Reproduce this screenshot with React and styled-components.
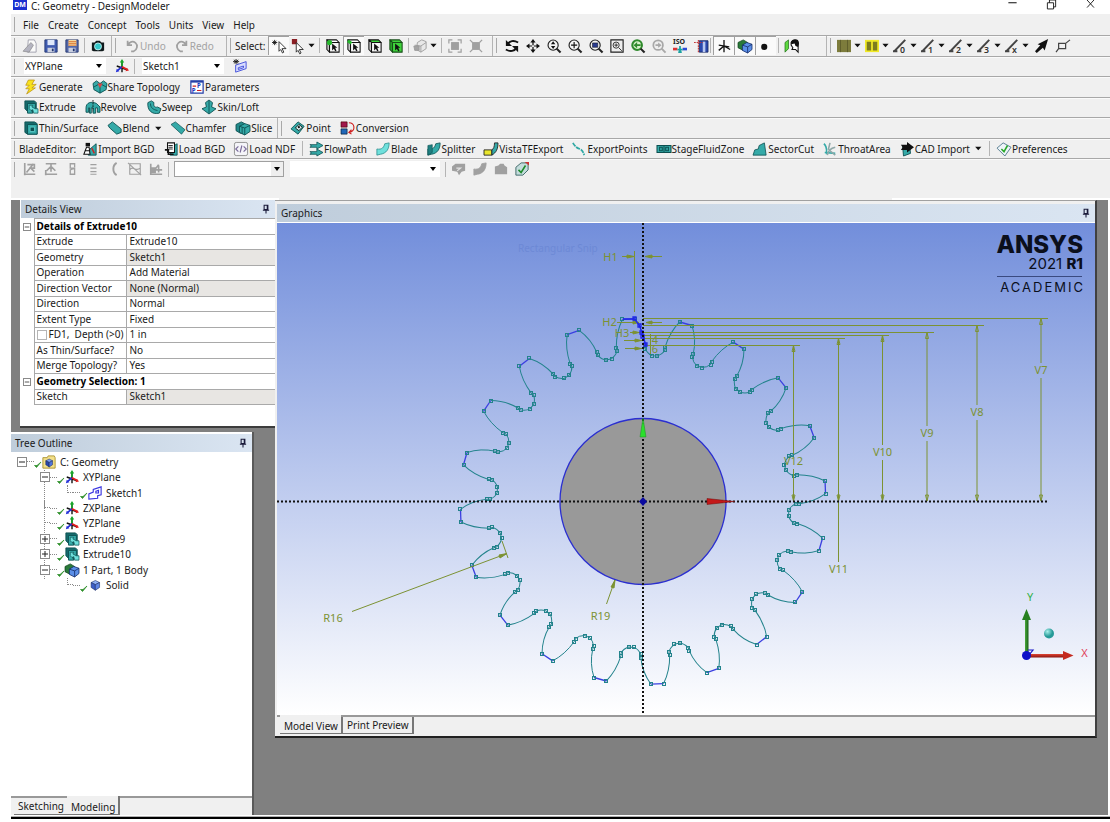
import React from 'react'
import styled, { createGlobalStyle, css } from 'styled-components'

const GlobalStyle = createGlobalStyle`
  body {
    margin: 0;
    background: #fff;
    font-family: 'Noto Sans', 'Open Sans', sans-serif;
    font-size: 10px;
    line-height: 14px;
    color: #1a1a1a;
  }
  button, select, input {
    font: inherit;
    color: inherit;
  }
`

const Page = styled.div`
  display: flex;
  flex-direction: column;
  min-height: 100vh;
  box-sizing: border-box;
  padding-left: 11px;
  overflow-x: hidden;
`

const TitleBar = styled.header`
  display: flex;
  align-items: flex-start;
  height: 14px;
  background: #fff;
`

const AppBadge = styled.span`
  width: 14px;
  height: 10px;
  margin: 0 4px 0 2px;
  background: #1b2fd0;
  color: #fff;
  font-size: 7px;
  font-weight: 700;
  line-height: 10px;
  text-align: center;
`

const Title = styled.h1`
  flex: 1;
  margin: 0;
  font-size: 10px;
  font-weight: 400;
  line-height: 12px;
`

const WindowButton = styled.button`
  display: flex;
  justify-content: center;
  width: 39px;
  height: 10px;
  padding: 0;
  border: 0;
  background: none;
`

const MenuBar = styled.nav`
  display: flex;
  align-items: center;
  height: 21px;
  background: #f0f0f0;
`

const MenuItem = styled.button`
  padding: 0 5px 0 4px;
  border: 0;
  background: none;
  white-space: nowrap;
`

const Toolbars = styled.div`
  display: grid;
  grid-auto-rows: 1fr;
  height: 144px;
  background: #f0f0f0;
`

const Toolbar = styled.div`
  display: flex;
  min-width: 0;
  border-top: 1px solid #a8a8a8;
  box-shadow: inset 0 1px #fafafa;
`

const Band = styled.div`
  display: flex;
  align-items: center;
  flex: none;
  box-sizing: border-box;
  width: ${p => (p.$w ? p.$w + 'px' : 'auto')};
  border-right: ${p => (p.$last ? '0' : '1px solid #b4b4b4')};
`

const Grip = styled.span`
  flex: none;
  width: 1px;
  height: 15px;
  margin: 0 4px 0 3px;
  background: #a9a9a9;
`

const Sep = styled.span`
  flex: none;
  width: 1px;
  height: 15px;
  margin: 0 2px;
  background: #b4b4b4;
`

const Spread = styled.div`
  display: flex;
  justify-content: space-between;
  width: 207px;
  & > * {
    min-width: 0;
    flex: 0 1 21px;
  }
`

const ToolButton = styled.button`
  display: flex;
  flex: none;
  align-items: center;
  justify-content: center;
  box-sizing: border-box;
  width: ${p => (p.$drop ? '28px' : '21px')};
  height: 19px;
  gap: 3px;
  padding: 0;
  border: 0;
  background: none;
  ${p => p.$pressed && css`
    background: #fafafa;
    box-shadow: inset 1px 1px #a0a0a0;
  `}
`

const LabelButton = styled.button`
  display: flex;
  flex: none;
  align-items: center;
  gap: 1px;
  padding: 0 5px;
  border: 0;
  background: none;
  white-space: nowrap;
  ${p => p.$tight && css`
    padding: 0 5px 0 4px;
  `}
  &:disabled {
    color: #a3a3a3;
  }
`

const BarLabel = styled.span`
  padding-right: 3px;
  white-space: nowrap;
`

const Picker = styled.label`
  position: relative;
  display: block;
  width: ${p => p.$w}px;
  margin: 0 ${p => (p.$close ? '3px' : '5px')};
  &::after {
    content: '';
    position: absolute;
    right: 4px;
    top: 6px;
    border: 3px solid transparent;
    border-top: 4px solid #000;
    border-bottom: 0;
    pointer-events: none;
  }
`

const PickerSelect = styled.select`
  display: block;
  box-sizing: border-box;
  width: 100%;
  height: 16px;
  padding: 0 1px;
  border: ${p => (p.$sunken ? '1px solid #a0a0a0' : '0')};
  border-radius: 0;
  background: ${p => (p.$sunken ? 'linear-gradient(#eee, #eee) right / 12px 100% no-repeat #fff' : '#fff')};
  appearance: none;
  line-height: 14px;
`

const ToolbarFoot = styled.div`
  display: flex;
  justify-content: space-between;
  align-items: flex-end;
  height: 21px;
  background: #f0f0f0;
`

const FootEdge = styled.span`
  height: 2px;
  width: ${p => p.$w}px;
  background: #fff;
`

const Workspace = styled.main`
  display: flex;
  flex: 1;
  align-items: stretch;
  margin-right: 2px;
  background: #808080;
`

const SideColumn = styled.div`
  display: flex;
  flex-direction: column;
  flex: none;
  width: 264px;
`

const DetailsPanel = styled.section`
  display: flex;
  flex-direction: column;
  height: 226px;
  margin-left: 9px;
  padding-left: 1px;
  border-bottom: 2px solid #3c3c3c;
  box-sizing: content-box;
  background: #fff;
`

const PanelTitle = styled.div`
  display: flex;
  align-items: center;
  flex: none;
  justify-content: space-between;
  height: 18px;
  padding: 0 4px;
  background: linear-gradient(90deg, #bfcddb, #dae5f2);
`

const PanelHeading = styled.h2`
  margin: 0;
  font-size: 10px;
  font-weight: 400;
`

const PinButton = styled.button`
  display: flex;
  padding: 0;
  border: 0;
  background: none;
`

const DetailsTable = styled.table`
  width: 100%;
  height: 187px;
  border-collapse: collapse;
  table-layout: fixed;
`

const Gutter = styled.td`
  width: 13px;
  padding: 0;
  text-align: center;
  line-height: 8px;
`

const NameCell = styled.th`
  width: 92px;
  padding: 0 0 0 2px;
  border: 1px solid #a9a9a9;
  box-sizing: border-box;
  font-weight: 400;
  text-align: left;
  line-height: 13px;
  white-space: nowrap;
`

const HeadCell = styled(NameCell)`
  width: auto;
  font-weight: 700;
  color: #000;
  border-right: 0;
`

const ValueCell = styled.td`
  padding: 0 0 0 3px;
  border: 1px solid #a9a9a9;
  border-right: 0;
  line-height: 13px;
  background: ${p => (p.$locked ? '#e8e6e3' : '#fff')};
`

const CheckLabel = styled.label`
  display: flex;
  align-items: center;
  gap: 2px;
  white-space: pre;
`

const Tick = styled.input`
  flex: none;
  width: 10px;
  height: 10px;
  margin: 0;
  border: 1px solid #b5b5b5;
  background: #fff;
  appearance: none;
`

const Expander = styled.button`
  display: inline-flex;
  flex: none;
  align-items: center;
  justify-content: center;
  box-sizing: border-box;
  width: ${p => (p.$small ? '8px' : '10px')};
  height: ${p => (p.$small ? '8px' : '10px')};
  padding: 0;
  border: 1px solid #8a8a8a;
  background: #fff;
`

const TreePanel = styled.section`
  display: flex;
  flex-direction: column;
  flex: 1;
  width: 241px;
  margin-top: 4px;
  border-right: 2px solid #5a5a5a;
  background: #fff;
`

const TreeTitle = styled(PanelTitle)`
  margin-top: 2px;
`

const TreeList = styled.ul`
  display: grid;
  grid-auto-rows: 1fr;
  height: 139px;
  margin: 2px 0 auto;
  padding: 0 0 0 6px;
  list-style: none;
  background: repeating-linear-gradient(#888 0 1px, #fff 1px 2px) 33px 16px / 1px 110px no-repeat;
`

const TreeRow = styled.li`
  display: flex;
  align-items: center;
`

const Guide = styled.span`
  flex: none;
  width: 23px;
`

const Elbow = styled.span`
  align-self: flex-start;
  flex: none;
  box-sizing: border-box;
  width: 6px;
  height: 50%;
  margin-left: 4px;
  border-left: 1px dotted #888;
  border-bottom: 1px dotted #888;
`

const Dash = styled.span`
  flex: none;
  width: 7px;
  border-top: 1px dotted #888;
`

const TreeLabel = styled.span`
  margin-left: 4px;
  white-space: nowrap;
`

const CheckMark = styled.span`
  align-self: flex-end;
`

const TabBar = styled.div`
  display: flex;
  align-items: flex-start;
  height: ${p => p.$h}px;
  padding-left: 3px;
  border-top: 2px solid #999;
  box-sizing: border-box;
  background: #f0f0f0;
`

const Tab = styled.button`
  height: 17px;
  padding: 0 3px 0 4px;
  border: 0;
  border-bottom: 1px solid #777;
  border-right: ${p => (p.$edge ? '2px solid #777' : '0')};
  border-left: ${p => (p.$boxed ? '2px solid #777' : '0')};
  background: #f0f0f0;
  white-space: nowrap;
  ${p => p.$active && css`
    height: 19px;
    margin-top: -2px;
    padding-top: 4px;
  `}
`

const GraphicsPanel = styled.section`
  flex: 1;
  align-self: flex-start;
  min-width: 0;
  margin-right: 11px;
  padding: 3px 0 0 2px;
  border-top: 1px solid #a0a0a0;
  border-right: 2px solid #404040;
  border-bottom: 2px solid #202020;
  background: #f0f0f0;
`

const Viewport = styled.div`
  height: 492px;
  border-top: 1px solid #fff;
  background: linear-gradient(#728edb, #fff);
`

const Scene = styled.svg`
  display: block;
  width: 100%;
  height: 100%;
  font-family: 'Noto Sans', 'Open Sans', sans-serif;
`

const BottomRule = styled.footer`
  height: 2px;
  margin: 1px 0 3px;
  background: #000;
  border-top: 1px solid #b0b0b0;
`

/* ---------- icons ---------- */

const T = '#35aaa8'
const TL = '#6fe0dc'
const TD = '#0b4f50'

const axes = (
  <g strokeWidth="2" fill="none">
    <path d="M8 15V3M2 8l11 4" stroke="#111" strokeWidth="1.6" />
    <path d="M8 8V2" stroke="#18a52a" />
    <path d="M8 9l-5 4" stroke="#2430d8" />
    <path d="M8 9l6 3" stroke="#e02020" />
    <path d="M16 13l-4 1 1.500-4z" fill="#e02020" />
    <path d="M1 15l1-4 3 3z" fill="#2430d8" />
    <path d="M5.500 4L8 0l2.500 4z" fill="#18a52a" />
  </g>
)
const lens = (c, body) => (
  <g>
    <circle cx="7" cy="7" r="5.8" fill="#f4f4f4" stroke={c} strokeWidth="1.3" />
    <path d="M11 11l4.500 4.500" stroke={c} strokeWidth="2.4" />
    {body}
  </g>
)
const cube = (top, face, side, edge = '#111') => (
  <g stroke={edge} strokeWidth="1.2" strokeLinejoin="round">
    <path d="M1 1h11l3 3H4z" fill={top} />
    <path d="M1 1l3 3v11l-3-3z" fill={side} />
    <path d="M4 4h11v11H4z" fill={face} />
  </g>
)
const pointer = <path d="M7 5l6 5h-2.500l1.500 3.500-1.500.5L9 11l-2 2z" fill="#111" />
const isoCube = (a, b, c, e) => (
  <g stroke={e} strokeWidth=".8" strokeLinejoin="round">
    <path d="M8 1l6 3-6 3-6-3z" fill={a} />
    <path d="M2 4l6 3v8l-6-4z" fill={b} />
    <path d="M14 4L8 7v8l6-4z" fill={c} />
  </g>
)
const edgeLine = n => (
  <g>
    <path d="M1.500 14L14 1M0 14h5" stroke="#444" strokeWidth="2.2" fill="none" />
    <text x="8" y="16" fontSize="10" fontWeight="600" fill="#333">{n}</text>
  </g>
)
const bladeShape = (f, s) => <path d="M1 8c6 1 8-2 9-6l5-1c0 7-3 12-10 13l-4 1z" fill={f} stroke={s} strokeWidth=".9" />

const icons = {
  fresh: <g><path d="M6 1h7l2 4v10H5z" fill="#fafafa" stroke="#9a9aa8" /><path d="M0 14L9 4l3 3-5 8z" fill="#b4b4c0" stroke="#777" strokeWidth=".6" /></g>,
  save: <g><path d="M1 1h14v14H1z" fill="#3f5bb0" stroke="#22356f" /><path d="M4 1h8v6H4z" fill="#dfe8fa" /><path d="M4 10h8v5H4z" fill="#c9cfe0" /><path d="M9 11h2v3H9z" fill="#22356f" /></g>,
  saveAs: <g><path d="M1 1h14v14H1z" fill="#5468a8" stroke="#22356f" /><path d="M4 1h9v7H4z" fill="#f3d9a0" /><path d="M4 3h9M4 5h9M4 7h9" stroke="#d96f2c" /><path d="M4 10h8v5H4z" fill="#c9cfe0" /><path d="M9 11h2v3H9z" fill="#22356f" /></g>,
  camera: <g><path d="M1 4h3l2-2h4l2 2h3v9l-2 1H3l-2-1z" fill="#101a1c" /><circle cx="8" cy="8.500" r="4" fill="#35c7c9" stroke="#c9f4f4" /></g>,
  undo: <path d="M3 2v5h5M3.500 7C5 3 9 2 12 4.500s2 8-2 9.500H7" fill="none" stroke="#a0a0a0" strokeWidth="2" />,
  redo: <path d="M13 2v5H8M12.500 7C11 3 7 2 4 4.500s-2 8 2 9.500h3" fill="none" stroke="#a0a0a0" strokeWidth="2" />,
  pick: <g><path d="M0 4h6M3 1v6M1 2l4 4M5 2L1 6" stroke="#111" /><path d="M8 3v11l2-2 2 4 1.500-1-2-4H16z" fill="#fff" stroke="#222" /></g>,
  pickBox: <g><path d="M1 0h6v6H1z" fill="#8a1f24" /><path d="M6 4v11l2-2 2 4 1.500-1-2-4H14z" fill="#fff" stroke="#222" /></g>,
  cubePoint: <g>{cube('#fff', '#f4f4f4', '#cfcfcf')}<circle cx="4" cy="4" r="3" fill="#26b82d" />{pointer}</g>,
  cubeEdge: <g>{cube('#fff', '#f4f4f4', '#cfcfcf')}<path d="M1 2l4 3" stroke="#26b82d" strokeWidth="3.500" />{pointer}</g>,
  cubeFace: <g>{cube('#3fd43c', '#f4f4f4', '#cfcfcf')}{pointer}</g>,
  cubeBody: <g>{cube('#3fd43c', '#3fd43c', '#2ba62c', '#174f18')}{pointer}</g>,
  cubeGray: <g stroke="#9a9a9a"><path d="M5 4l5-3 5 2v8l-6 4-5-3z" fill="#e8e8e8" /><path d="M2 7l7 1 6-4M9 8v7" fill="none" /><path d="M1 8h6v5H2z" fill="#a4a4a4" /></g>,
  extend: <g fill="#a0a0a0"><path d="M3.500 3.500h9v9h-9z" /><path d="M1 5V1h4M11 1h4v4M15 11v4h-4M5 15H1v-4" fill="none" stroke="#a0a0a0" strokeWidth="1.400" /></g>,
  shrink: <g fill="#a0a0a0"><path d="M3.500 3.500h9v9h-9z" /><path d="M1 1l3 3M15 1l-3 3M15 15l-3-3M1 15l3-3" stroke="#a0a0a0" strokeWidth="1.400" /></g>,
  rotate: <g fill="none" stroke="#111" strokeWidth="2.200"><path d="M3 6c2-4 7-5 12-2M13 10c-2 4-7 5-12 2" /><path d="M1 1v7h7zM15 15V8H8z" fill="#111" stroke="none" /></g>,
  pan: <g fill="#111"><path d="M8 0l3 4H5zM8 16l3-4H5zM0 8l4-3v6zM16 8l-4-3v6z" /><path d="M8 3v10M3 8h10" stroke="#111" strokeWidth="1.400" strokeDasharray="4 2" /></g>,
  zoom: lens('#222', <path d="M7 2.500L9.500 6h-5zM7 11.500L9.500 8h-5z" fill="#111" />),
  zoomIn: lens('#222', <path d="M3.500 7h7M7 3.500v7" stroke="#111" strokeWidth="1.300" />),
  zoomBox: lens('#222', <path d="M4 4.500h6v5H4z" fill="#2a3b8f" stroke="#111" strokeWidth=".6" />),
  zoomFit: <g><path d="M1 1h14v14H1z" fill="#eee" stroke="#222" strokeWidth="1.300" /><circle cx="7" cy="7" r="3.500" fill="none" stroke="#222" /><path d="M5 7h4M7 5v4M10 10l3.500 3.500" stroke="#222" /></g>,
  zoomPrev: <g><circle cx="7" cy="7" r="5.500" fill="#d9f3cc" stroke="#2f8a2c" strokeWidth="2.400" /><path d="M3 7l4-3.500V6h4v2H7v2.500z" fill="#2f8a2c" /><path d="M11 11l4.500 4.500" stroke="#222" strokeWidth="2.400" /></g>,
  zoomNext: <g><circle cx="7" cy="7" r="5.500" fill="#eee" stroke="#a8a8a8" strokeWidth="2" /><path d="M11 7L7 4v2H4v2h3v2z" fill="#a8a8a8" /><path d="M11 11l4.500 4.500" stroke="#a8a8a8" strokeWidth="2.200" /></g>,
  iso: <g><text x="0" y="6" fontSize="8" fontWeight="700" fill="#222">ISO</text><path d="M8 8v7" stroke="#18a0a0" strokeWidth="2" /><path d="M0 10h5v3H0z" fill="#d33" /><path d="M11 10h5v3h-5z" fill="#2a4bd8" /><path d="M5 12h6M6 15h4" stroke="#18a0a0" strokeWidth="2" /></g>,
  lookAt: <g><path d="M6 2h10v13H6z" fill="#2c49ad" stroke="#1a2a66" /><path d="M10 3h3v12h-3z" fill="#b9c8f0" /><path d="M5 15V0M0 4h10" stroke="#c23a3a" strokeWidth="1.300" strokeDasharray="2 1" /></g>,
  plane: <path d="M8 1v14M2 13l6-5 7 4M2 7l12 2" fill="none" stroke="#111" strokeWidth="1.500" />,
  bodies: <g><path d="M0 4l6-3 5 3v6l-5 3-6-3z" fill="#2a7a3a" stroke="#10401a" strokeWidth=".8" /><path d="M5 7l5-3 6 2v6l-5 4-6-3z" fill="#5b8fe8" stroke="#132a66" strokeWidth=".9" /><path d="M5 7l6 2v7M11 9l5-3" fill="none" stroke="#132a66" strokeWidth=".9" /></g>,
  dot: <circle cx="6" cy="9" r="3.500" fill="#111" />,
  face: <g><path d="M0 4l4-3v10l-4 4z" fill="#5ed83f" stroke="#1d6f14" strokeWidth=".8" /><path d="M7 4c2-4 8-4 8 0v11l-3-3H8l1-2-2-3z" fill="#fff" stroke="#111" strokeWidth="1.200" /><path d="M7 3c3-4 9-2 9 2l-1 4-3-1-1-3-4 1z" fill="#111" /></g>,
  swatch: <g><path d="M0 1h16v14H0z" fill="#7d7c3c" /><path d="M4 1v14M12 1v14" stroke="#5c5b2a" /></g>,
  swatchY: <g><path d="M0 1h16v14H0z" fill="#f1ea28" /><path d="M2 3h5v10H2zM9 3h5v10H9z" fill="#7d7c1e" /></g>,
  e0: edgeLine('0'), e1: edgeLine('1'), e2: edgeLine('2'), e3: edgeLine('3'), ex: edgeLine('x'),
  arrowNE: <path d="M15 0L3 6l3 1-6 7 2 2 7-6 2 3z" fill="#111" />,
  flagBox: <path d="M3 5h8v6H3zM0 15l3-4M11 5l5-4" fill="none" stroke="#444" strokeWidth="1.400" />,
  axes,
  newSketch: <g><path d="M3 7l12-4v8L3 15zM6 10l6-2v2l-6 2z" fill="#d8dcff" stroke="#3a48d8" /><path d="M0 3h7M3.500 0v6M1 1l5 4M6 1L1 5" stroke="#111" /></g>,
  sketch: <path d="M1 15V9l5-2V4l9-3v9l-4 1v3zM9 6l3-1v3H9z" fill="none" stroke="#3a35e0" strokeWidth="1.300" />,
  bolt: <path d="M5 0h7L9 5h5L9 9h4L3 16l3-6H2l4-4H2z" fill="#f8e21c" stroke="#b98d10" strokeWidth=".8" />,
  share: <g><path d="M0 4l4-3 4 3 4-3 4 3-1 7-7 4-7-4z" fill={T} stroke={TD} /><path d="M8 5v10M1 8l7-4 7 4" stroke={TD} fill="none" /><path d="M5 4h6l-3 5z" fill="#d94848" /></g>,
  params: <g><path d="M1 1h14v14H1z" fill="#fff" stroke="#2540a8" strokeWidth="1.400" /><path d="M1 1h14v2H1z" fill="#2540a8" /><text x="8" y="9" fontSize="7" fontWeight="700" fill="#1a3ac0">P</text><text x="2" y="15" fontSize="7" fontWeight="700" fill="#1a3ac0">P</text><path d="M3 7h4M8 12h5" stroke="#d02020" strokeWidth="1.300" /></g>,
  extrude: <g><path d="M1 1h11l2 2v10H4l-3-3z" fill="#16696b" stroke={TD} /><path d="M4 4h9v6H8l2 5H4z" fill={T} stroke={TD} /><path d="M6 6h4l-1 2 4 2h3v5h-5l-1-4-2 1-2-2z" fill={TL} stroke={TD} strokeWidth=".8" /></g>,
  revolve: <g><path d="M0 9c0-6 6-8 12-5l4 4v6h-3V9h-2v6H8V9H6v6H4V9H3v5H0z" fill={T} stroke={TD} /><path d="M8 0v13" stroke="#111" strokeDasharray="2 1" /></g>,
  sweep: <g><path d="M1 3l4-2 3 2c-1 4 1 6 4 5l4 2-2 5C6 17 0 12 1 3z" fill={T} stroke={TD} /><path d="M4 4c0 5 3 7 8 8" fill="none" stroke={TD} /></g>,
  skin: <g><path d="M8 0l4 3-1 5 5 2-8 6-8-6 5-2-1-5z" fill={T} stroke={TD} /><path d="M8 1v14" stroke={TD} /></g>,
  thin: <g><path d="M1 1h11l3 2v12H4l-3-2z" fill="#16696b" stroke={TD} /><path d="M4 4h11v11H4z" fill={T} stroke={TD} /><path d="M7 7h5v5H7z" fill={TD} stroke={TL} strokeWidth=".8" /></g>,
  blend: <path d="M0 5l5-4 10 8v4l-5 2-8-7z" fill={T} stroke={TD} />,
  chamfer: <path d="M0 4l5-3 11 9-4 5z" fill={T} stroke={TD} strokeWidth=".8" />,
  slice: <g stroke={TD}><path d="M0 4l6-3 4 2v7l-5 4-5-3z" fill="#238a8a" /><path d="M4 6l6-3 6 2v7l-6 4-6-3z" fill={T} /><path d="M4 6l6 2v8M10 8l6-3M7 7v8" fill="none" /></g>,
  point: <g><path d="M0 9l8-8 7 5-7 9z" fill={T} stroke={TD} /><path d="M5 8l4-4 4 3-4 4z" fill="#d9f4f4" stroke="#111" /><circle cx="9" cy="7" r="1.200" fill="#111" /></g>,
  convert: <g><path d="M0 1h7v6H0z" fill="#a0184c" stroke="#400" strokeWidth=".7" /><path d="M0 9h7v6H0z" fill="#2268b8" stroke="#012" strokeWidth=".7" /><path d="M9 2c7 0 8 9 1 11M12 10l-3 3 3 2" fill="none" stroke="#d02020" strokeWidth="1.300" /></g>,
  importBgd: <g><path d="M8 8l7-6v13H6z" fill={T} stroke={TD} /><path d="M1 14L4 6h3l1 8zM2 10h6" fill="#fff" stroke="#111" strokeWidth="1.200" /><path d="M3 1h5v4H3z" fill="#111" /><path d="M10 7l3 6" stroke="#d02020" strokeWidth="1.600" /></g>,
  loadBgd: <g><path d="M10 5l5-3v13H7z" fill={T} stroke={TD} /><path d="M4 1h8v11H4z" fill="#fff" stroke="#111" strokeWidth="1.200" /><path d="M5 4h5M5 6h5M5 8h5" stroke="#111" /><path d="M1 9h4v5h6" fill="none" stroke="#111" strokeWidth="1.800" /></g>,
  ndf: <g><rect x=".5" y=".5" width="15" height="15" rx="2" fill="#f4f4f8" stroke="#888" /><path d="M5 5L2 8l3 3M11 5l3 3-3 3M9 4l-2 8" fill="none" stroke="#7a6a9a" strokeWidth="1.300" /></g>,
  flow: <path d="M1 3h8V0l7 4-7 4V6H1l2-1.500zM1 11h8V8l7 4-7 4v-2H1l2-1.500z" fill={T} stroke={TD} strokeWidth=".9" />,
  blade: bladeShape(TL, '#2b8f8f'),
  splitter: <g>{bladeShape(T, TD)}<path d="M1 4l5-1v9l-5 3z" fill="#1f7f80" stroke={TD} strokeWidth=".7" /></g>,
  vista: <g><path d="M0 9h9v6H0z" fill="#e9e62c" stroke="#222" /><path d="M9 9c2-1 3-4 3-8h4c0 7-2 11-7 14z" fill={T} stroke="#222" /></g>,
  points: <path d="M1 1c3 5 5 6 8 7s4 4 5 7" fill="none" stroke="#30a8a4" strokeWidth="2" strokeDasharray="5 1" />,
  stage: <path d="M0 4h16v8H0zM3 6h3v4H3zM10 6h3v4h-3zM8 4v8" fill={T} stroke={TD} strokeWidth="1.200" />,
  sector: <path d="M0 15l2-6 4-1 1-4 6-3 2 14z" fill={T} stroke={TD} strokeWidth=".9" />,
  throat: <g fill="none" strokeWidth="1.800"><path d="M1 2c4 3 3 7 3 12M2 12l12 1" stroke={T} /><path d="M5 15c1-6 4-8 9-9M8 10l6 5M8 1l-2 8" stroke="#8fa8a8" /></g>,
  cad: <g><path d="M3 5l8-1 1 9-8 3z" fill={T} stroke={TD} /><path d="M1 3h7V0l8 6-8 6V9H1l2-3z" fill="#111" /></g>,
  prefs: <g><path d="M0 7l7-6 9 5-7 10z" fill="#eef4f8" stroke="#4a7388" /><path d="M5 8l3 3 4-7" fill="none" stroke="#2aa82a" strokeWidth="1.800" /></g>,
  g1: <path d="M2 15V1M1 14h13M4 12l8-10M5 3h8v4H7M9 7l4 4" fill="none" stroke="#a0a0a0" strokeWidth="1.900" />,
  g2: <path d="M1 14h14M2 2h12M8 2v9M3 10l5-5 5 5M2 15V9" fill="none" stroke="#a0a0a0" strokeWidth="1.900" />,
  g3: <path d="M11 6V2H6v5h5v7H6V9l5-2" fill="none" stroke="#a0a0a0" strokeWidth="1.500" />,
  g4: <path d="M5 3h7M5 7h7M5 11h7M5 14h7" fill="none" stroke="#a0a0a0" strokeWidth="1.200" />,
  g5: <path d="M11 1c-5 3-5 11 0 14" fill="none" stroke="#a0a0a0" strokeWidth="2.200" />,
  g6: <path d="M2 2h12v12H2zM0 1l15 14M2 9c4-6 6 3 12-2" fill="none" stroke="#a0a0a0" strokeWidth="1.300" />,
  g7: <g fill="none" stroke="#a0a0a0" strokeWidth="1.900"><path d="M2 2v12h13M5 11l6-8M7 9h8M11 4v8" /><path d="M3 7h4v5H3z" fill="#a0a0a0" /></g>,
  b1: <g><path d="M0 5l4-3h11v8l-4 1-3 4-2-4-6-1z" fill="#a0a0a0" /><path d="M5 7h5l-4 3" fill="none" stroke="#e4e4e4" strokeWidth="1.200" /></g>,
  b2: bladeShape('#a0a0a0', '#a0a0a0'),
  b3: <path d="M1 5l4-1 2-2h4l1 2 3 2v8H1z" fill="#a0a0a0" />,
  b4: <g><path d="M1 6l6-5h8v8l-6 6H1z" fill="#c4dcdc" stroke="#33605f" /><path d="M4 9l3 3 5-8" fill="none" stroke="#1d8a2a" strokeWidth="1.800" /><path d="M11 0h5v4z" fill="#c33" /></g>,
  project: <g><path d="M1 3h5l1-2h7l1 2v12H1z" fill="#f3e08a" stroke="#a8902c" /><g transform="translate(3 4) scale(.65)">{isoCube('#7da0f0', '#2c49ad', '#4f74dd', '#0d1c55')}</g></g>,
  solid: <g transform="translate(2 2) scale(.8)">{isoCube('#8fb0f5', '#3c5fc8', '#5f86e6', '#16275f')}</g>,
  check: <path d="M1 9l4 4 9-11-8 7z" fill="#2d8f2a" stroke="#2d8f2a" strokeWidth="1.500" />,
  pin: <path d="M5 2h6v7H5zM3 10h10M8 10v5M10 2v7" fill="none" stroke="#1a1a3a" strokeWidth="1.700" />,
  minus: <path d="M2 8h12" stroke="#222" strokeWidth="2" />,
  plus: <path d="M2 8h12M8 2v12" stroke="#222" strokeWidth="2" />,
  arrow: <path d="M1 4h14l-7 8z" fill="#111" />,
  min: <path d="M2 4h12" stroke="#111" strokeWidth="1.500" />,
  restore: <path d="M2 4h9v9H2zM5 4V0h9v10h-3" fill="none" stroke="#111" strokeWidth="1.300" />,
  close: <path d="M3 0l10 11M13 0L3 11" stroke="#111" strokeWidth="1.300" />,
}

const Glyph = styled.svg`
  display: block;
  flex: none;
  overflow: visible;
`

const Icon = ({ name, size = 14 }) => (
  <Glyph width={size} height={size} viewBox="0 0 16 16" aria-hidden="true">{icons[name]}</Glyph>
)

const Tool = ({ icon, drop, pressed }) => (
  <ToolButton $drop={drop} $pressed={pressed} aria-label={icon}>
    <Icon name={icon} />
    {drop && <Icon name="arrow" size={7} />}
  </ToolButton>
)

const Labelled = ({ icon, children, drop, tight, disabled }) => (
  <LabelButton $tight={tight} disabled={disabled}>
    <Icon name={icon} />
    <span>{children}</span>
    {drop && <Glyph width="11" height="7" viewBox="-8 0 24 16" aria-hidden="true">{icons.arrow}</Glyph>}
  </LabelButton>
)

/* ---------- gear sketch ---------- */

const CX = 643
const CY = 501.5
const OLIVE = '#7c9233'
const TEAL = '#23838c'
const marks = [[36.7, -179.5], [49, -176], [50.3, -147.8], [49.3, -144.8], [53.5, -136], [58.5, -134], [67.5, -137], [68.7, -140]]

const turn = ([x, y], deg) => {
  const a = (deg * Math.PI) / 180
  return [CX + x * Math.cos(a) - y * Math.sin(a), CY + x * Math.sin(a) + y * Math.cos(a)]
}

const Tooth = ({ deg }) => (
  <g>
    <g transform={`translate(${CX} ${CY}) rotate(${deg})`} fill="none">
      <path d="M36.700-179.500L49-176" stroke="#3a3fe0" strokeWidth="1.300" />
      <path
        d="M49-176Q53.500-162 50.300-147.800L49.300-144.800Q50-139 53.500-136L58.500-134Q64-134 67.500-137L68.700-140Q78-153 90.400-159.400"
        stroke={TEAL}
      />
    </g>
    {marks.map((m, i) => {
      const [x, y] = turn(m, deg)
      return <rect key={i} x={Math.round(x) - 1.5} y={Math.round(y) - 1.5} width="3" height="3" fill="none" stroke={TEAL} />
    })}
  </g>
)

const heights = [
  { n: 'V7', x: 1041, top: 318.5, at: 370, end: 1048 },
  { n: 'V8', x: 977, top: 325.5, at: 412, end: 984 },
  { n: 'V9', x: 927, top: 332.5, at: 433, end: 934 },
  { n: 'V10', x: 882.5, top: 335.5, at: 452, end: 889 },
  { n: 'V11', x: 838.5, top: 338.5, at: 569, end: 845 },
  { n: 'V12', x: 793.5, top: 345.5, at: 461, end: 800 },
]

const Height = ({ n, x, top, at, end }) => (
  <g stroke={OLIVE} fill="none">
    <path d={`M643 ${top}H${end}`} />
    {at > 501
      ? <path d={`M${x} ${top}V${at - 7}`} />
      : <path d={`M${x} ${top}V${at - 7}M${x} ${at + 8}V501`} />}
    <path d={`M${x - 1.5} ${top + 6}L${x} ${top}l1.500 6zM${x - 1.5} 495L${x} 501l1.500-6z`} />
    <text x={x} y={at + 4} textAnchor="middle" fontSize="11" fill={OLIVE} stroke="none">{n}</text>
  </g>
)

const GearScene = () => (
  <Scene viewBox="277 223 818 492" role="img" aria-label="Gear sketch">
    <defs>
      <linearGradient id="shaftX" x2="0" y2="1">
        <stop offset="0" stopColor="#e04434" />
        <stop offset="1" stopColor="#8a1410" />
      </linearGradient>
      <linearGradient id="shaftY">
        <stop offset="0" stopColor="#4aa83c" />
        <stop offset="1" stopColor="#176016" />
      </linearGradient>
      <radialGradient id="ball" cx=".35" cy=".3">
        <stop offset="0" stopColor="#a8f0ea" />
        <stop offset="1" stopColor="#269a98" />
      </radialGradient>
    </defs>
    <text x="518" y="252" fontSize="10" fill="#5675c9" opacity=".35">Rectangular Snip</text>

    <circle cx={CX} cy={CY} r="83" fill="#999" stroke="#2b2fd0" strokeWidth="1.300" />
    {Array.from({ length: 20 }, (_, i) => <Tooth key={i} deg={i * 18} />)}
    {heights.map(h => <Height key={h.n} {...h} />)}

    <g stroke={OLIVE} fill="none">
      <path d="M634.500 251v61M622 256.500h12M645 256.500h17M617 322.500h21M647 322.500h15M630 332.500h11M650 332.500h10M624 340.500h18M625 348.500h18M650.500 334v20" />
      <g fill={OLIVE}>
        <path d="M627 255l7 1.500-7 1.500zM652 255l-7 1.500 7 1.500zM633 321l6 1.500-6 1.500zM652 321l-6 1.500 6 1.500zM633 331l6 1.500-6 1.500zM635 339l6 1.500-6 1.500zM635 347l6 1.500-6 1.500z" />
        <path d="M507 553.500l-8 1.500 1 3zM615 580l-4 7 3 1z" />
      </g>
      <path d="M352 611.500L507 553.500M502 541l6 17M606.500 604L615 580" />
    </g>
    <g fill={OLIVE} fontSize="11" textAnchor="middle">
      <text x="610.500" y="261">H1</text>
      <text x="609.500" y="326">H2</text>
      <text x="622" y="337">H3</text>
      <text x="655" y="344">4</text>
      <text x="655" y="353">6</text>
      <text x="333" y="622">R16</text>
      <text x="600.500" y="620">R19</text>
    </g>

    <g stroke="#1f24ea" fill="none" strokeWidth="1.300">
      <path d="M623 319h11.500L639.500 325.500 642 333 644 339 646 346" />
      <path d="M633 317h3v3h-3zM638 324h3v3h-3zM640 331h3v3h-3zM641 335h3v3h-3zM644 343h3v3h-3z" />
    </g>

    <path d="M643 223V715M277 501.500H1047" stroke="#111" strokeWidth="2" strokeDasharray="2 2" fill="none" />
    <path d="M643 418l-3 19h6z" fill="#2be02b" stroke="#1d8f20" strokeWidth=".5" />
    <path d="M735 501.500L707 498.500v6z" fill="#c41818" stroke="#6f0f0f" strokeWidth=".5" />
    <path d="M643 497l4 4.500-4 4.500-4-4.500z" fill="#0b0ba0" />

    <path d="M1025 655V620h3.500V655z" fill="url(#shaftY)" />
    <path d="M1022 620l4.500-11 4.500 11z" fill="#26801f" />
    <path d="M1027 654h37v3.500h-37z" fill="url(#shaftX)" />
    <path d="M1063 651l10.500 4.500-10.500 4.500z" fill="#c42a20" />
    <path d="M1028 650h5l-4 5" fill="none" stroke="#1313c8" strokeWidth="1.200" />
    <circle cx="1026.500" cy="655.500" r="4.500" fill="#0d10c8" />
    <circle cx="1049" cy="633.500" r="5" fill="url(#ball)" />
    <text x="1030" y="601" textAnchor="middle" fontSize="11" fill="#35b04a">Y</text>
    <text x="1084.500" y="657" textAnchor="middle" fontSize="11" fill="#e0405a">X</text>

    <g fill="#0b0f1c" textAnchor="end" fontFamily="Inter, sans-serif">
      <text x="1083" y="253" fontSize="24" fontWeight="800">ANSYS</text>
      <text x="1083" y="269" fontSize="15">2021 <tspan fontWeight="800">R1</tspan></text>
      <text x="1085" y="292" fontSize="13" letterSpacing="2">ACADEMIC</text>
    </g>
    <path d="M997 276.500h85" stroke="#3a4a80" />
  </Scene>
)

/* ---------- panels ---------- */

const details = [
  { head: 'Details of Extrude10' },
  { name: 'Extrude', value: 'Extrude10' },
  { name: 'Geometry', value: 'Sketch1', locked: true },
  { name: 'Operation', value: 'Add Material' },
  { name: 'Direction Vector', value: 'None (Normal)', locked: true },
  { name: 'Direction', value: 'Normal' },
  { name: 'Extent Type', value: 'Fixed' },
  { name: 'FD1,  Depth (>0)', value: '1 in', tick: true },
  { name: 'As Thin/Surface?', value: 'No' },
  { name: 'Merge Topology?', value: 'Yes' },
  { head: 'Geometry Selection: 1' },
  { name: 'Sketch', value: 'Sketch1', locked: true },
]

const tree = [
  { label: 'C: Geometry', icon: 'project', level: 0, box: 'minus' },
  { label: 'XYPlane', icon: 'axes', level: 1, box: 'minus' },
  { label: 'Sketch1', icon: 'sketch', level: 2 },
  { label: 'ZXPlane', icon: 'axes', level: 1 },
  { label: 'YZPlane', icon: 'axes', level: 1 },
  { label: 'Extrude9', icon: 'extrude', level: 1, box: 'plus' },
  { label: 'Extrude10', icon: 'extrude', level: 1, box: 'plus' },
  { label: '1 Part, 1 Body', icon: 'bodies', level: 1, box: 'minus' },
  { label: 'Solid', icon: 'solid', level: 2 },
]

const Details = () => (
  <DetailsPanel>
    <PanelTitle>
      <PanelHeading>Details View</PanelHeading>
      <PinButton aria-label="Pin details"><Icon name="pin" size={10} /></PinButton>
    </PanelTitle>
    <DetailsTable>
      <colgroup>
        <col style={{ width: 13 }} />
        <col style={{ width: 92 }} />
        <col />
      </colgroup>
      <tbody>
        {details.map(d => (
          <tr key={d.head || d.name}>
            <Gutter>
              {d.head && <Expander $small aria-label="Collapse group"><Icon name="minus" size={6} /></Expander>}
            </Gutter>
            {d.head && <HeadCell colSpan={2}>{d.head}</HeadCell>}
            {d.name && (
              <NameCell scope="row">
                {d.tick ? <CheckLabel><Tick type="checkbox" />{d.name}</CheckLabel> : d.name}
              </NameCell>
            )}
            {d.name && <ValueCell $locked={d.locked}>{d.value}</ValueCell>}
          </tr>
        ))}
      </tbody>
    </DetailsTable>
  </DetailsPanel>
)

const Tree = () => (
  <TreePanel>
    <TreeTitle>
      <PanelHeading>Tree Outline</PanelHeading>
      <PinButton aria-label="Pin tree"><Icon name="pin" size={10} /></PinButton>
    </TreeTitle>
    <TreeList>
      {tree.map(t => (
        <TreeRow key={t.label}>
          {t.level > 0 && <Guide />}
          {t.level > 1 && <Guide />}
          {t.box
            ? <Expander aria-label="Toggle"><Icon name={t.box} size={8} /></Expander>
            : <Elbow />}
          <Dash />
          <CheckMark><Icon name="check" size={8} /></CheckMark>
          <Icon name={t.icon} />
          <TreeLabel>{t.label}</TreeLabel>
        </TreeRow>
      ))}
    </TreeList>
    <TabBar $h={19}>
      <Tab>Sketching</Tab>
      <Tab $active $edge>Modeling</Tab>
    </TabBar>
  </TreePanel>
)

const menus = ['File', 'Create', 'Concept', 'Tools', 'Units', 'View', 'Help']

export default function App() {
  return (
    <Page>
      <GlobalStyle />
      <TitleBar>
        <AppBadge>DM</AppBadge>
        <Title>C: Geometry - DesignModeler</Title>
        <WindowButton aria-label="Minimize"><Icon name="min" size={11} /></WindowButton>
        <WindowButton aria-label="Restore"><Icon name="restore" size={11} /></WindowButton>
        <WindowButton aria-label="Close"><Icon name="close" size={11} /></WindowButton>
      </TitleBar>
      <MenuBar>
        <Grip />
        {menus.map(m => <MenuItem key={m}>{m}</MenuItem>)}
      </MenuBar>

      <Toolbars>
        <Toolbar>
          <Band $w={101}>
            <Grip />
            <Tool icon="fresh" /><Tool icon="save" /><Tool icon="saveAs" />
            <Sep />
            <Tool icon="camera" />
          </Band>
          <Band $w={115}>
            <Grip />
            <Labelled disabled icon="undo">Undo</Labelled>
            <Labelled tight disabled icon="redo">Redo</Labelled>
          </Band>
          <Band $w={266}>
            <Grip />
            <BarLabel>Select:</BarLabel>
            <Tool icon="pick" pressed /><Tool icon="pickBox" drop />
            <Sep />
            <Tool icon="cubePoint" /><Tool icon="cubeEdge" pressed /><Tool icon="cubeFace" /><Tool icon="cubeBody" />
            <Sep />
            <Tool icon="cubeGray" drop />
            <Sep />
            <Tool icon="extend" /><Tool icon="shrink" />
          </Band>
          <Band $w={334}>
            <Grip />
            <Spread>
              {['rotate', 'pan', 'zoom', 'zoomIn', 'zoomBox', 'zoomFit', 'zoomPrev', 'zoomNext', 'iso', 'lookAt'].map(i => <Tool key={i} icon={i} />)}
            </Spread>
            <Sep />
            <Tool icon="plane" pressed /><Tool icon="bodies" pressed /><Tool icon="dot" pressed />
            <Sep />
            <Tool icon="face" />
          </Band>
          <Band $last>
            <Grip />
            {['swatch', 'swatchY', 'e0', 'e1', 'e2', 'e3', 'ex'].map(i => <Tool key={i} icon={i} drop />)}
            <Tool icon="arrowNE" /><Tool icon="flagBox" />
          </Band>
        </Toolbar>

        <Toolbar>
          <Band $last>
            <Grip />
            <Picker $w={82}>
              <PickerSelect aria-label="Plane"><option>XYPlane</option></PickerSelect>
            </Picker>
            <Tool icon="axes" />
            <Sep />
            <Picker $w={82}>
              <PickerSelect aria-label="Sketch"><option>Sketch1</option></PickerSelect>
            </Picker>
            <Tool icon="newSketch" />
          </Band>
        </Toolbar>

        <Toolbar>
          <Band $last>
            <Grip />
            <Labelled icon="bolt">Generate</Labelled>
            <Labelled icon="share">Share Topology</Labelled>
            <Labelled icon="params">Parameters</Labelled>
          </Band>
        </Toolbar>

        <Toolbar>
          <Band $last>
            <Grip />
            <Labelled icon="extrude">Extrude</Labelled>
            <Labelled icon="revolve">Revolve</Labelled>
            <Labelled icon="sweep">Sweep</Labelled>
            <Labelled icon="skin">Skin/Loft</Labelled>
          </Band>
        </Toolbar>

        <Toolbar>
          <Band>
            <Grip />
            <Labelled icon="thin">Thin/Surface</Labelled>
            <Labelled tight icon="blend" drop>Blend</Labelled>
            <Labelled tight icon="chamfer">Chamfer</Labelled>
            <Labelled icon="slice">Slice</Labelled>
          </Band>
          <Band $last>
            <Grip />
            <Labelled icon="point">Point</Labelled>
            <Labelled icon="convert">Conversion</Labelled>
          </Band>
        </Toolbar>

        <Toolbar>
          <Band $last>
            <Grip />
            <BarLabel>BladeEditor:</BarLabel>
            <Labelled tight icon="importBgd">Import BGD</Labelled>
            <Labelled tight icon="loadBgd">Load BGD</Labelled>
            <Labelled tight icon="ndf">Load NDF</Labelled>
            <Sep />
            <Labelled tight icon="flow">FlowPath</Labelled>
            <Labelled tight icon="blade">Blade</Labelled>
            <Labelled tight icon="splitter">Splitter</Labelled>
            <Labelled tight icon="vista">VistaTFExport</Labelled>
            <Labelled tight icon="points">ExportPoints</Labelled>
            <Labelled tight icon="stage">StageFluidZone</Labelled>
            <Labelled tight icon="sector">SectorCut</Labelled>
            <Labelled tight icon="throat">ThroatArea</Labelled>
            <Labelled tight icon="cad" drop>CAD Import</Labelled>
            <Sep />
            <Labelled icon="prefs">Preferences</Labelled>
          </Band>
        </Toolbar>

        <Toolbar>
          <Band $last>
            <Grip />
            {['g1', 'g2', 'g3', 'g4', 'g5', 'g6', 'g7'].map(i => <Tool key={i} icon={i} />)}
            <Sep />
            <Picker $close $w={110}>
              <PickerSelect $sunken aria-label="Blade row"><option /></PickerSelect>
            </Picker>
            <Picker $close $w={150}>
              <PickerSelect aria-label="Blade feature"><option /></PickerSelect>
            </Picker>
            <Sep />
            {['b1', 'b2', 'b3', 'b4'].map(i => <Tool key={i} icon={i} />)}
          </Band>
        </Toolbar>
      </Toolbars>
      <ToolbarFoot>
        <FootEdge $w={268} />
        <FootEdge $w={218} />
      </ToolbarFoot>

      <Workspace>
        <SideColumn>
          <Details />
          <Tree />
        </SideColumn>
        <GraphicsPanel>
          <PanelTitle>
            <PanelHeading>Graphics</PanelHeading>
            <PinButton aria-label="Pin graphics"><Icon name="pin" size={10} /></PinButton>
          </PanelTitle>
          <Viewport><GearScene /></Viewport>
          <TabBar $h={21}>
            <Tab $active>Model View</Tab>
            <Tab $edge $boxed>Print Preview</Tab>
          </TabBar>
        </GraphicsPanel>
      </Workspace>
      <BottomRule />
    </Page>
  )
}
